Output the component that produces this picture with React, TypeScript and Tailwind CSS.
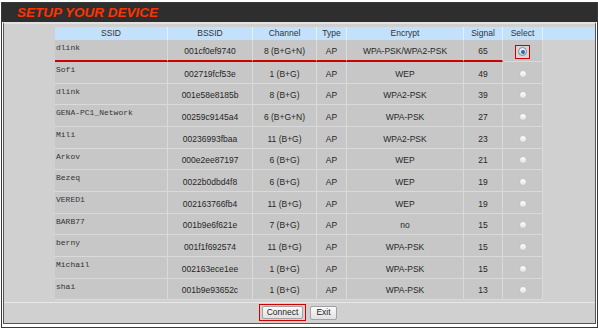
import React from "react";

type Network = {
  ssid: string;
  bssid: string;
  channel: string;
  type: string;
  encrypt: string;
  signal: number;
};

const networks: Network[] = [
  { ssid: "dlink", bssid: "001cf0ef9740", channel: "8 (B+G+N)", type: "AP", encrypt: "WPA-PSK/WPA2-PSK", signal: 65 },
  { ssid: "Sofi", bssid: "002719fcf53e", channel: "1 (B+G)", type: "AP", encrypt: "WEP", signal: 49 },
  { ssid: "dlink", bssid: "001e58e8185b", channel: "8 (B+G)", type: "AP", encrypt: "WPA2-PSK", signal: 39 },
  { ssid: "GENA-PC1_Network", bssid: "00259c9145a4", channel: "6 (B+G+N)", type: "AP", encrypt: "WPA-PSK", signal: 27 },
  { ssid: "Mili", bssid: "00236993fbaa", channel: "11 (B+G)", type: "AP", encrypt: "WPA2-PSK", signal: 23 },
  { ssid: "Arkov", bssid: "000e2ee87197", channel: "6 (B+G)", type: "AP", encrypt: "WEP", signal: 21 },
  { ssid: "Bezeq", bssid: "0022b0dbd4f8", channel: "6 (B+G)", type: "AP", encrypt: "WEP", signal: 19 },
  { ssid: "VERED1", bssid: "002163766fb4", channel: "11 (B+G)", type: "AP", encrypt: "WEP", signal: 19 },
  { ssid: "BARB77", bssid: "001b9e6f621e", channel: "7 (B+G)", type: "AP", encrypt: "no", signal: 15 },
  { ssid: "berny", bssid: "001f1f692574", channel: "11 (B+G)", type: "AP", encrypt: "WPA-PSK", signal: 15 },
  { ssid: "Michail", bssid: "002163ece1ee", channel: "1 (B+G)", type: "AP", encrypt: "WPA-PSK", signal: 15 },
  { ssid: "shai", bssid: "001b9e93652c", channel: "1 (B+G)", type: "AP", encrypt: "WPA-PSK", signal: 13 },
];

const cols = "grid grid-cols-[113px_85px_64px_30px_117px_39px_40px]";

const Radio: React.FC<{ checked?: boolean }> = ({ checked }) =>
  checked ? (
    <span className="flex h-[14px] w-[15px] items-center justify-center border border-[#cc0000] bg-[#d6d6d6]">
      <span className="flex h-[9px] w-[9px] items-center justify-center rounded-full border border-[#7d8a96] bg-gradient-to-b from-[#f4f7fa] to-[#cfd8e0]">
        <span className="h-[4px] w-[4px] rounded-full bg-[#2f64b3]" />
      </span>
    </span>
  ) : (
    <span className="h-[8px] w-[8px] rounded-full border border-[#c4c4c4] bg-gradient-to-b from-[#ffffff] to-[#e2e2e2]" />
  );

export default function App() {
  return (
    <div className="h-[328px] w-[598px] bg-white pl-[1px] pt-[2px] font-['Liberation_Sans',Arial,sans-serif]">
      <div className="flex h-[326px] w-[597px] flex-col border border-[#3a3a3a] bg-white px-[1px] pb-[1px]">
        {/* title bar */}
        <div className="-mx-[1px] flex h-[19px] shrink-0 items-center bg-[#2e2e2e] pl-[15px]">
          <span className="text-[13.5px] font-bold italic leading-none text-[#ff3300]">SETUP YOUR DEVICE</span>
        </div>

        {/* body */}
        <div className="flex h-[302px] flex-col border-x border-b border-t-2 border-x-[#555] border-b-[#555] border-t-[#e2e2e2] bg-[#d0d0d0]">
          <div className="ml-[51px] pt-[3px] text-[8.5px] text-[#262626]">
            <div className={`${cols} h-[13px] bg-[#c3e1fb]`}>
              {["SSID", "BSSID", "Channel", "Type", "Encrypt", "Signal", "Select"].map((h) => (
                <div key={h} className="flex items-center justify-center border-r border-[#e4f1fc] leading-none text-[#333]">
                  {h}
                </div>
              ))}
            </div>

            {networks.map((n, i) => {
              const first = i === 0;
              const h = i % 3 === 2 ? "h-[21px]" : "h-[22px]";
              const line = first ? "border-b-2 border-b-[#cc0000]" : "border-b border-b-[#dadada]";
              return (
                <div key={n.bssid} className={`${cols} ${h}`}>
                  <div className={`border-r border-r-[#dadada] bg-[#c7c7c7] pl-[1px] pt-[3px] font-['Liberation_Mono',monospace] text-[8px] leading-[9px] text-[#333] ${line}`}>
                    {n.ssid}
                  </div>
                  {[n.bssid, n.channel, n.type, n.encrypt, String(n.signal)].map((v, j) => (
                    <div
                      key={j}
                      className={`flex items-center justify-center border-r border-r-[#dadada] bg-[#c7c7c7] pt-[3px] leading-none ${line}`}
                    >
                      {v}
                    </div>
                  ))}
                  <div className="flex items-center justify-center border-b border-r border-[#dadada] bg-[#c7c7c7] pt-[2px]">
                    <Radio checked={first} />
                  </div>
                </div>
              );
            })}
          </div>

          {/* buttons */}
          <div className="mt-[2px] flex flex-1 items-center justify-center gap-[4px] border-t border-[#e8e8e8] pb-[1px] pr-[3px] text-[8.5px] text-[#222]">
            <div className="border border-[#cc0000] px-[2px] py-[1px]">
              <button className="flex h-[13px] w-[41px] items-center justify-center rounded-[2px] border border-[#a3a3a3] bg-gradient-to-b from-[#fafafa] to-[#e1e1e1] leading-none">
                Connect
              </button>
            </div>
            <button className="flex h-[14px] w-[27px] items-center justify-center rounded-[2px] border border-[#a3a3a3] bg-gradient-to-b from-[#fafafa] to-[#e1e1e1] leading-none">
              Exit
            </button>
          </div>
        </div>
      </div>
    </div>
  );
}
